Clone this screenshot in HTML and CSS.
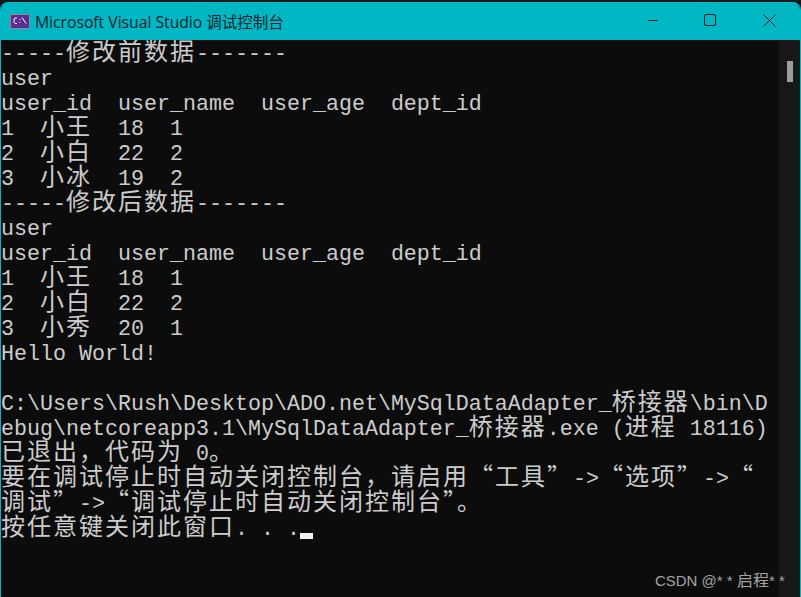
FILE: index.html
```html
<!DOCTYPE html>
<html lang="zh-CN">
<head>
<meta charset="utf-8">
<title>Microsoft Visual Studio 调试控制台</title>
<link rel="stylesheet" href="styles.css">
</head>
<body>
<div class="window">
  <header class="titlebar">
    <svg class="app-icon" width="20" height="15" viewBox="0 0 20 15">
      <rect x="0" y="0" width="20" height="15" fill="#8a8aa0"/>
      <rect x="1" y="1" width="18" height="13" fill="#5b2d90"/>
      <path d="M7 4H5L4 5V8.5L5 9.5H7M10 5V6M10 8V9M12 3.5L16 9.5" fill="none" stroke="#fff" stroke-width="1"/>
    </svg>
    <span class="title">Microsoft Visual Studio <span class="title-cjk">调试控制台</span></span>
    <div class="controls">
      <svg class="ctl" width="10" height="14" viewBox="0 0 10 14"><path d="M0 6.5H10" stroke="#0b1a22" stroke-width="1"/></svg>
      <svg class="ctl" width="13" height="14" viewBox="0 0 13 14"><rect x="0.5" y="0.5" width="11" height="11" rx="1.5" fill="none" stroke="#0b1a22" stroke-width="1"/></svg>
      <svg class="ctl" width="13" height="14" viewBox="0 0 13 14"><path d="M0.5 0.5L12.5 12.5M12.5 0.5L0.5 12.5" stroke="#0b1a22" stroke-width="1"/></svg>
    </div>
  </header>
  <div class="body">
    <main class="console">
      <div class="line">-----<span class="zh">修改前数据</span>-------</div>
      <div class="line">user</div>
      <div class="line">user_id  user_name  user_age  dept_id</div>
      <div class="line">1  <span class="zh">小王</span>  18  1</div>
      <div class="line">2  <span class="zh">小白</span>  22  2</div>
      <div class="line">3  <span class="zh">小冰</span>  19  2</div>
      <div class="line">-----<span class="zh">修改后数据</span>-------</div>
      <div class="line">user</div>
      <div class="line">user_id  user_name  user_age  dept_id</div>
      <div class="line">1  <span class="zh">小王</span>  18  1</div>
      <div class="line">2  <span class="zh">小白</span>  22  2</div>
      <div class="line">3  <span class="zh">小秀</span>  20  1</div>
      <div class="line">Hello World!</div>
      <div class="line"></div>
      <div class="line">C:\Users\Rush\Desktop\ADO.net\MySqlDataAdapter_<span class="zh">桥接器</span>\bin\D</div>
      <div class="line">ebug\netcoreapp3.1\MySqlDataAdapter_<span class="zh">桥接器</span>.exe (<span class="zh">进程</span> 18116)</div>
      <div class="line"><span class="zh">已退出，代码为</span> 0<span class="zh">。</span></div>
      <div class="line"><span class="zh">要在调试停止时自动关闭控制台，请启用“工具”</span>-&gt;<span class="zh">“选项”</span>-&gt;<span class="zh">“</span></div>
      <div class="line"><span class="zh">调试”</span>-&gt;<span class="zh">“调试停止时自动关闭控制台”。</span></div>
      <div class="line"><span class="zh">按任意键关闭此窗口</span>. . .<span class="cursor"></span></div>
    </main>
    <aside class="scrollbar"><div class="thumb"></div></aside>
  </div>
  <div class="watermark">CSDN @<span class="stars">**</span><span class="wm-zh">启程</span><span class="stars">**</span></div>
</div>
</body>
</html>
```
FILE: styles.css
```css
* { box-sizing: border-box; }
html, body { margin: 0; padding: 0; width: 801px; height: 597px; overflow: hidden; background: #16181a; }
.window {
  position: relative;
  margin-top: 2px;
  height: 595px;
  display: flex;
  flex-direction: column;
  border-left: 1px solid #00b7c3;
  border-right: 1px solid #00b7c3;
  border-radius: 8px 8px 0 0;
  overflow: hidden;
}
.titlebar {
  flex: 0 0 38px;
  display: flex;
  align-items: center;
  padding-left: 9px;
  background: #00b7c3;
  color: #06222c;
}
.app-icon { flex: none; margin-right: 5px; }
.title { font: 15.7px/20px "Open Sans", "Noto Sans CJK SC", sans-serif; white-space: pre; }
.title-cjk { font-family: "Noto Sans CJK SC", sans-serif; font-size: 15.5px; }
.controls { margin-left: auto; margin-right: 24px; display: flex; gap: 46px; align-items: center; }
.ctl { display: block; }
.body { flex: 1; display: flex; min-height: 0; background: #0c0c0c; }
.console {
  flex: 1;
  padding-top: 2px;
  font: 21.67px/25px "Liberation Mono", "Noto Sans CJK SC", monospace;
  color: #cccccc;
  overflow: hidden;
}
.line { height: 25px; white-space: pre; }
.zh {
  font-family: "Noto Sans CJK SC", sans-serif;
  font-size: 24px;
  font-weight: 400;
  letter-spacing: 2px;
  line-height: 0;
}
.cursor { display: inline-block; width: 13px; height: 6px; background: #f2f2f2; vertical-align: -4px; }
.scrollbar { flex: 0 0 21px; background: #171717; padding: 21px 0 0 8px; }
.thumb { width: 6px; height: 21px; background: #9e9e9e; }
.watermark {
  position: absolute;
  right: 11px;
  bottom: 7px;
  font: 15px/18px "Liberation Sans", "Noto Sans CJK SC", sans-serif;
  color: #a3a3a3;
}
.stars { letter-spacing: 4.2px; }
.wm-zh { font-family: "Noto Sans CJK SC", sans-serif; font-size: 16px; }
```
